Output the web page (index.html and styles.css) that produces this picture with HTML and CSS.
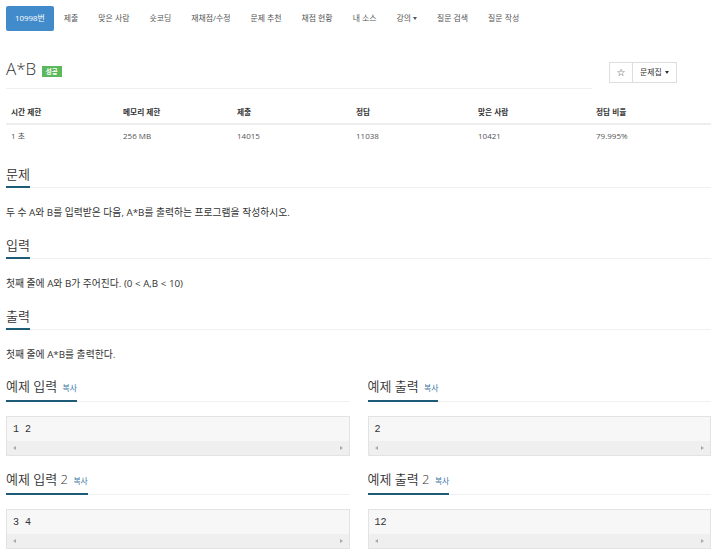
FILE: index.html
```html
<!DOCTYPE html>
<html lang="ko">
<head>
<meta charset="utf-8">
<title>A*B</title>
<link rel="stylesheet" href="styles.css">
</head>
<body>
<div class="page">
  <ul class="nav">
    <li class="active"><a>10998번</a></li>
    <li><a>제출</a></li>
    <li><a>맞은 사람</a></li>
    <li><a>숏코딩</a></li>
    <li><a>재채점/수정</a></li>
    <li><a>문제 추천</a></li>
    <li><a>채점 현황</a></li>
    <li><a>내 소스</a></li>
    <li><a>강의<span class="caret"></span></a></li>
    <li><a>질문 검색</a></li>
    <li><a>질문 작성</a></li>
  </ul>

  <div class="title-row">
    <div class="title-main">
      <h1 class="title">A*B <span class="badge">성공</span></h1>
    </div>
    <div class="title-tools">
      <div class="btn-group">
        <span class="btn btn-star">☆</span>
        <span class="btn">문제집<span class="caret"></span></span>
      </div>
    </div>
  </div>

  <table class="info">
    <colgroup>
      <col class="c1"><col class="c2"><col class="c3"><col class="c4"><col class="c5"><col class="c6">
    </colgroup>
    <thead>
      <tr><th>시간 제한</th><th>메모리 제한</th><th>제출</th><th>정답</th><th>맞은 사람</th><th>정답 비율</th></tr>
    </thead>
    <tbody>
      <tr><td>1 초</td><td>256 MB</td><td>14015</td><td>11038</td><td>10421</td><td>79.995%</td></tr>
    </tbody>
  </table>

  <section class="sec">
    <div class="headline"><h2>문제</h2></div>
    <p>두 수 A와 B를 입력받은 다음, A*B를 출력하는 프로그램을 작성하시오.</p>
  </section>
  <section class="sec">
    <div class="headline"><h2>입력</h2></div>
    <p>첫째 줄에 A와 B가 주어진다. (0 &lt; A,B &lt; 10)</p>
  </section>
  <section class="sec">
    <div class="headline"><h2>출력</h2></div>
    <p>첫째 줄에 A*B를 출력한다.</p>
  </section>

  <div class="samples">
    <div class="sample">
      <div class="headline"><h2>예제 입력 <a class="copy">복사</a></h2></div>
      <div class="pre"><div class="code">1 2</div><div class="scroll"><span class="arr-l"></span><span class="arr-r"></span></div></div>
    </div>
    <div class="sample">
      <div class="headline"><h2>예제 출력 <a class="copy">복사</a></h2></div>
      <div class="pre"><div class="code">2</div><div class="scroll"><span class="arr-l"></span><span class="arr-r"></span></div></div>
    </div>
    <div class="sample">
      <div class="headline"><h2>예제 입력 2 <a class="copy">복사</a></h2></div>
      <div class="pre"><div class="code">3 4</div><div class="scroll"><span class="arr-l"></span><span class="arr-r"></span></div></div>
    </div>
    <div class="sample">
      <div class="headline"><h2>예제 출력 2 <a class="copy">복사</a></h2></div>
      <div class="pre"><div class="code">12</div><div class="scroll"><span class="arr-l"></span><span class="arr-r"></span></div></div>
    </div>
  </div>
</div>
</body>
</html>
```

FILE: styles.css
```css
* { box-sizing: border-box; }
html, body { margin: 0; padding: 0; background: #fff; }
body {
  font-family: "Open Sans", "Noto Sans CJK KR", sans-serif;
  color: #333;
  width: 720px;
  height: 552px;
  overflow: hidden;
}
.page { padding: 6px 9px 0 6px; }

/* nav */
.nav {
  list-style: none;
  margin: 0;
  padding: 0;
  display: flex;
  height: 25px;
}
.nav li a {
  display: block;
  height: 25px;
  line-height: 25px;
  padding: 0 10px;
  font-size: 7.9px;
  color: #555;
  border-radius: 2px;
  white-space: nowrap;
}
.nav li.active a {
  background: #428bca;
  color: #fff;
  padding: 0 9px;
}
.caret {
  display: inline-block;
  width: 0;
  height: 0;
  margin-left: 2px;
  vertical-align: middle;
  border-top: 3px solid #555;
  border-left: 2.5px solid transparent;
  border-right: 2.5px solid transparent;
}

/* title */
.title-row {
  display: flex;
  margin-top: 28px;
}
.title-main {
  flex: 1;
  border-bottom: 1px solid #eee;
  padding-bottom: 9px;
}
.title {
  margin: 0;
  font-size: 17px;
  line-height: 20px;
  font-weight: 300;
  color: #333;
}
.badge {
  display: inline-block;
  vertical-align: 1px;
  background: #5cb85c;
  color: #fff;
  font-size: 6.5px;
  font-weight: 700;
  line-height: 11px;
  height: 11px;
  padding: 0 4px;
  margin-left: 1px;
}
.title-tools {
  width: 119px;
  padding-left: 17px;
  padding-top: 3px;
}
.btn-group { display: flex; }
.btn {
  display: block;
  height: 21px;
  line-height: 19px;
  border: 1px solid #ddd;
  font-size: 7.9px;
  color: #333;
  padding: 0 7px;
  background: #fff;
}
.btn + .btn { border-left: none; }
.btn-star {
  width: 24px;
  text-align: center;
  padding: 0;
  font-family: "DejaVu Sans", sans-serif;
  font-size: 10px;
  color: #333;
}
.btn .caret { border-top-color: #333; margin-left: 3px; }

/* table */
.info {
  width: 705px;
  table-layout: fixed;
  border-collapse: collapse;
  margin-top: 12px;
}
.info .c1 { width: 112px; }
.info .c2 { width: 114px; }
.info .c3 { width: 119px; }
.info .c4 { width: 122px; }
.info .c5 { width: 118px; }
.info th, .info td {
  text-align: left;
  padding: 5px;
  font-size: 7.7px;
  line-height: 12px;
}
.info th {
  font-weight: 700;
  border-bottom: 2px solid #eee;
}
.info td { color: #555; font-size: 8px; }

/* sections */
.sec { margin-top: 18px; }
.sec + .sec { margin-top: 15px; }
.headline {
  display: flex;
  border-bottom: 1px solid #f0f0f0;
}
.headline h2 {
  margin: 0 0 -1px 0;
  font-size: 13px;
  line-height: 18px;
  font-weight: 350;
  color: #333;
  padding-bottom: 3px;
  border-bottom: 2px solid #1d5b78;
  white-space: nowrap;
}
.sec p {
  margin: 17px 0 0 0;
  font-size: 9.8px;
  line-height: 16px;
  color: #333;
}
.copy {
  font-size: 7.8px;
  font-weight: 400;
  margin-left: 2px;
  color: #3c76a3;
}

/* samples */
.samples {
  display: grid;
  grid-template-columns: 1fr 1fr;
  column-gap: 18px;
  row-gap: 14px;
  margin-top: 14px;
}
.pre {
  margin-top: 14px;
  border: 1px solid #e3e3e3;
  background: #f7f7f7;
  height: 40px;
}
.code {
  font-family: "Liberation Mono", "DejaVu Sans Mono", monospace;
  font-size: 10px;
  line-height: 14px;
  padding: 6px 6px 4px;
  color: #333;
  white-space: pre;
}
.scroll {
  height: 14px;
  background: #efefef;
  display: flex;
  justify-content: space-between;
  align-items: center;
  padding: 0 6px;
}
.arr-l, .arr-r {
  width: 0;
  height: 0;
  border-top: 2.5px solid transparent;
  border-bottom: 2.5px solid transparent;
}
.arr-l { border-right: 3px solid #aaa; }
.arr-r { border-left: 3px solid #aaa; }
```
